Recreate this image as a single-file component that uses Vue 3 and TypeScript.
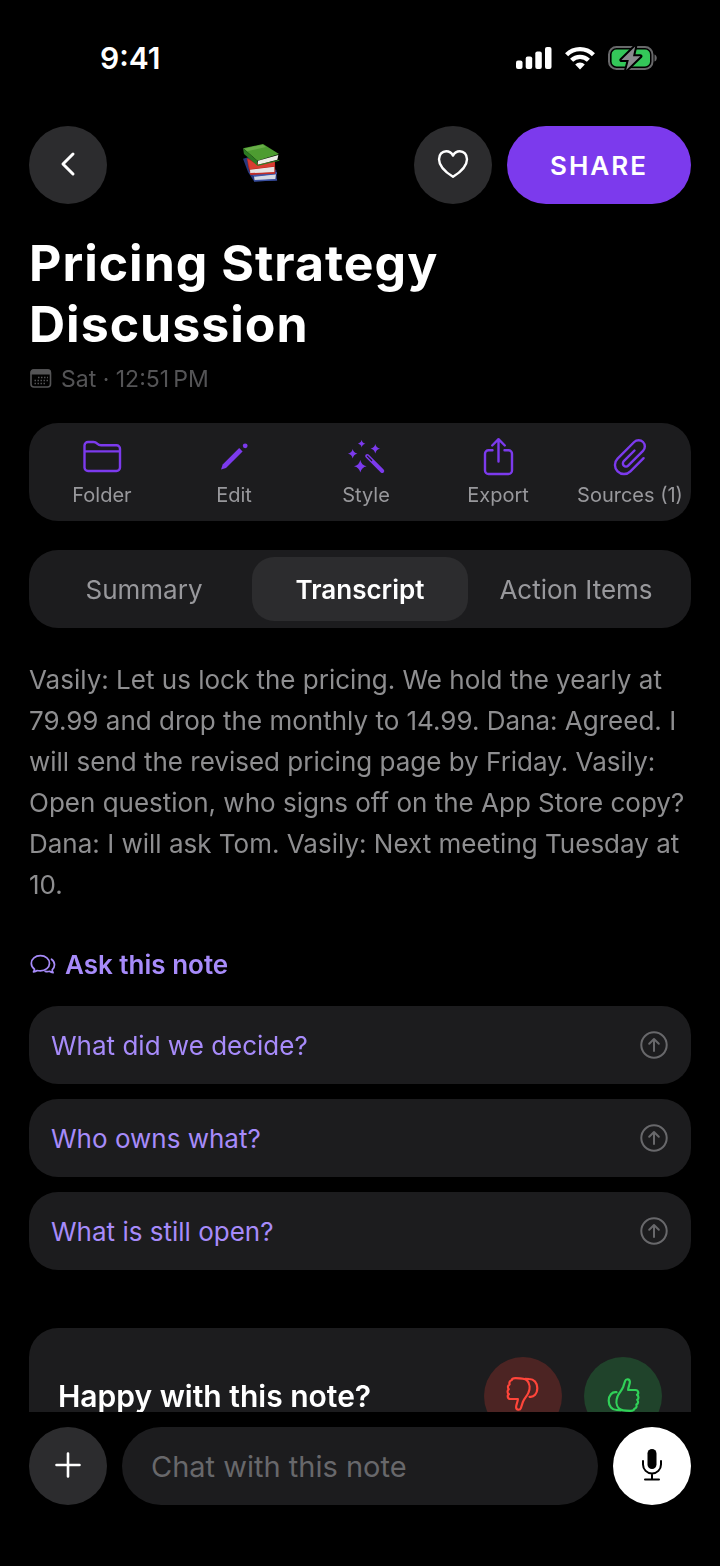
<script setup lang="ts">
import { ref } from 'vue'

type Tab = 'Summary' | 'Transcript' | 'Action Items'

const tabs: Tab[] = ['Summary', 'Transcript', 'Action Items']
const activeTab = ref<Tab>('Transcript')
const questions: string[] = ['What did we decide?', 'Who owns what?', 'What is still open?']
const message = ref('')
const transcript =
  'Vasily: Let us lock the pricing. We hold the yearly at 79.99 and drop the monthly to 14.99. Dana: Agreed. I will send the revised pricing page by Friday. Vasily: Open question, who signs off on the App Store copy? Dana: I will ask Tom. Vasily: Next meeting Tuesday at 10.'
</script>

<template>
  <div class="screen">
    <div class="status">
      <span class="clock">9:41</span>
      <div class="indicators">
        <svg width="36" height="24" viewBox="0 0 36 24" fill="#fff" aria-hidden="true">
          <rect x="0" y="14.5" width="6.5" height="8.5" rx="2" />
          <rect x="9.7" y="10.5" width="6.5" height="12.5" rx="2" />
          <rect x="19.3" y="5.5" width="6.5" height="17.5" rx="2" />
          <rect x="29" y="1" width="6.5" height="22" rx="2" />
        </svg>
        <svg width="30" height="24" viewBox="0 0 30 24" aria-hidden="true">
          <g fill="none" stroke="#fff" stroke-width="4.4">
            <path d="M1.600 8.700a19 19 0 0 1 26.800 0" />
            <path d="M6.600 14.300a12 12 0 0 1 16.800 0" />
          </g>
          <path d="M15 23.400l-4.800-4.900a6.800 6.800 0 0 1 9.600 0z" fill="#fff" />
        </svg>
        <svg width="50" height="26" viewBox="0 0 50 26" aria-hidden="true">
          <rect x="1" y="2" width="43.5" height="22" rx="7.5" fill="none" stroke="#68686a" stroke-width="2" />
          <path d="M46.500 9.500c3 1 3 6 0 7z" fill="#68686a" />
          <rect x="3.600" y="4.600" width="38.400" height="16.800" rx="5" fill="#34c759" />
          <path d="M27.200 1.500L13.400 15h7.400l-2.600 10L32.400 11.200H25z" fill="#8a8a8e" stroke="#000" stroke-width="4" stroke-linejoin="round" />
          <path d="M27.200 1.500L13.400 15h7.400l-2.600 10L32.400 11.200H25z" fill="#8a8a8e" />
        </svg>
      </div>
    </div>

    <header class="header">
      <button class="round" type="button" aria-label="Back">
        <svg width="40" height="40" viewBox="0 0 40 40" fill="none" stroke="#fff" stroke-width="3" stroke-linecap="round" stroke-linejoin="round">
          <path d="M25 9L15 19l10 10" />
        </svg>
      </button>
      <div class="emblem">
        <svg width="40" height="44" viewBox="31 39 120 132" role="img" aria-label="Books">
          <path d="M37 86l16-4 84 38 2 32-69 2-18-28z" fill="#28387c" />
          <path d="M70 139l66-7-2 16-62 4z" fill="#d5d9e4" />
          <path d="M54 128l18 12 67-7v-6l-60-8z" fill="#3d55a8" />
          <path d="M70 150l68-3 2 4-70 4z" fill="#3a50a0" />
          <path d="M49 84l34 14 50-2 1 34-74 4-7-22z" fill="#b3231e" />
          <path d="M58 119l73-9v17l-72 4z" fill="#e6e4e4" />
          <path d="M50 86l32 20 50-11v14l-75 9z" fill="#d83c31" />
          <path d="M58 129l75-2v4l-74 3z" fill="#c22e28" />
          <path d="M37 55l60-13 48 30-65 20z" fill="#4d9c31" />
          <path d="M41 56l55-12 10 7-57 13z" fill="#69ae48" />
          <path d="M37 55l43 37v15L40 72z" fill="#2c7a22" />
          <path d="M82 92l61-17-3 14-58 15z" fill="#eceeE6" />
          <path d="M80 104l66-15v3l-66 16z" fill="#2f7d24" />
        </svg>
      </div>
      <button class="round" type="button" aria-label="Favorite">
        <svg width="40" height="40" viewBox="0 0 40 40" fill="none" stroke="#fff" stroke-width="2.400" stroke-linejoin="round">
          <path d="M20 31.800C12 26.800 6 21.100 6 14.200 6 9.500 9.200 6.200 13.200 6.200c3 0 5.400 1.600 6.800 4.400 1.400-2.800 3.800-4.400 6.800-4.400 4 0 7.200 3.300 7.200 8 0 6.900-6 12.600-14 17.600z" />
        </svg>
      </button>
      <button class="share" type="button">SHARE</button>
    </header>

    <main class="content">
      <h1>Pricing Strategy Discussion</h1>
      <p class="meta">
        <svg width="22" height="22" viewBox="0 0 22 22" aria-hidden="true">
          <rect x="1" y="2" width="19.500" height="17" rx="3" fill="none" stroke="#545456" stroke-width="1.600" />
          <path d="M.6 6.500V4.500A3 3 0 0 1 3.600 1.300h14.300a3 3 0 0 1 3 3.200v2z" fill="#545456" />
          <path d="M8 9.500h10M4.500 12.500H18M4.500 15.500H15" stroke="#545456" stroke-width="1.500" stroke-dasharray="1.500 1.500" />
        </svg>
        <span>Sat · 12:51&#8201;PM</span>
      </p>

      <nav class="tools" aria-label="Note tools">
        <button type="button">
          <svg viewBox="0 0 40 40">
            <path d="M2.500 30.500V8.500A3.500 3.500 0 0 1 6 5h5.500c1.700 0 2.500.4 3.700 1.600 1.300 1.200 2.100 1.600 3.800 1.600h15.500A3.500 3.500 0 0 1 38 11.700v18.800a3.500 3.500 0 0 1-3.500 3.500H6a3.500 3.500 0 0 1-3.500-3.500zM2.500 14.400H38" />
          </svg>
          <span>Folder</span>
        </button>
        <button type="button">
          <svg viewBox="0 0 40 40">
            <path class="solid" d="M7 32.600l1.700-5L25.200 11l3.400 3.400L12 31z" />
            <circle class="solid" cx="31.200" cy="8.800" r="2.400" />
          </svg>
          <span>Edit</span>
        </button>
        <button type="button">
          <svg viewBox="0 0 40 40">
            <path class="solid" d="M15.700 3q.6 3.100 3.700 3.700-3.100.6-3.700 3.700-.6-3.100-3.700-3.700 3.100-.6 3.700-3.700zM29.300 7q.8 3.900 4.700 4.700-3.900.8-4.700 4.700-.8-3.900-4.700-4.700 3.900-.8 4.700-4.700zM6.700 12q.8 3.900 4.700 4.700-3.900.8-4.700 4.700-.8-3.900-4.700-4.700 3.900-.8 4.700-4.700zM14.300 23q1.100 5.200 6.300 6.300-5.200 1.100-6.300 6.300-1.100-5.200-6.300-6.300 5.200-1.100 6.300-6.300z" />
            <path d="M21.200 19l15 15" stroke-width="4" />
            <path class="slot" d="M21.400 19.200l4.300 4.300" />
          </svg>
          <span>Style</span>
        </button>
        <button type="button">
          <svg viewBox="0 0 40 40">
            <path d="M14.500 13.200H10.500A3.500 3.500 0 0 0 7 16.700v16.800a3.500 3.500 0 0 0 3.500 3.500h20a3.500 3.500 0 0 0 3.500-3.500V16.700a3.500 3.500 0 0 0-3.500-3.500h-4M20.500 24.500V2.500M14.200 8.500l6.300-6.300 6.300 6.300" />
          </svg>
          <span>Export</span>
        </button>
        <button type="button">
          <svg viewBox="0 0 40 40">
            <path d="M33.600 21.200L20.400 34.400A9 9 0 0 1 7.600 21.600L24.200 5a6.200 6.200 0 0 1 8.800 8.800L18.200 28.600a3.100 3.100 0 0 1-4.400-4.400L24.500 13.500" />
          </svg>
          <span>Sources (1)</span>
        </button>
      </nav>

      <div class="tabs" role="tablist">
        <button
          v-for="tab in tabs"
          :key="tab"
          type="button"
          role="tab"
          :aria-selected="tab === activeTab"
          :class="{ active: tab === activeTab }"
          @click="activeTab = tab"
        >
          {{ tab }}
        </button>
      </div>

      <p class="transcript">{{ transcript }}</p>

      <h2>
        <svg width="26" height="22" viewBox="0 0 26 22" fill="none" stroke="#a78bfa" stroke-width="1.700" stroke-linecap="round" stroke-linejoin="round" aria-hidden="true">
          <path d="M4.500 15.300C2.400 13.800 1.300 11.700 1.300 9.300c0-4.300 4-7.600 9.100-7.600s9.100 3.300 9.100 7.600-4 7.600-9.100 7.600c-1.200 0-2.200-.1-3.200-.4-1 .7-2.200 1.200-3.700 1.400.7-.8 1-1.700 1-2.600z" />
          <path d="M21.500 5.200c1.900 1.400 3 3.300 3 5.500 0 2-.9 3.800-2.300 5.100 0 1 .3 2 .9 2.900-1.500-.2-2.700-.8-3.600-1.400-1.200.3-2.500.4-4.300.1" />
        </svg>
        Ask this note
      </h2>
      <div class="questions">
        <button v-for="question in questions" :key="question" type="button">
          <span>{{ question }}</span>
          <svg width="30" height="30" viewBox="0 0 30 30" fill="none" stroke="#68686b" stroke-width="2" stroke-linecap="round" stroke-linejoin="round" aria-hidden="true">
            <circle cx="15" cy="15" r="12.700" />
            <path d="M15 21V9.500M10.200 13.700L15 9l4.800 4.700" />
          </svg>
        </button>
      </div>

      <section class="feedback">
        <h3>Happy with this note?</h3>
        <button class="round bad" type="button" aria-label="Thumbs down">
          <svg width="40" height="40" viewBox="0 0 40 40">
            <g transform="rotate(180 20 18.500)">
              <path d="M14.500 20.500c1.200-3.500 4.300-6 5.600-9.300l2-6.200c.9-2.600 4.600-2.200 4.800.8.100 2.500-1.700 5-1.800 8.200h7.300c3.300 0 3.600 3.900 1.600 4.800 2 1.200 1.800 4 .2 5 1.500 1.500 1 4-.8 4.800.8 2-.3 3.700-2 4.100-.2 1.500-1.700 2.200-4 2.200-5 0-9.500-.3-11.400-2.300-3.200-3.200-3-8.500-1.500-12.100z" />
              <path d="M13.500 16.200c-4.500-.8-7.800 3.200-7.800 8.500 0 5.500 3.500 9.300 8 9.300l4 .2" />
            </g>
          </svg>
        </button>
        <button class="round good" type="button" aria-label="Thumbs up">
          <svg width="40" height="40" viewBox="0 0 40 40">
            <path d="M14.500 20.500c1.200-3.500 4.300-6 5.600-9.300l2-6.200c.9-2.600 4.600-2.200 4.800.8.100 2.500-1.700 5-1.800 8.200h7.300c3.300 0 3.600 3.900 1.600 4.800 2 1.200 1.800 4 .2 5 1.500 1.500 1 4-.8 4.800.8 2-.3 3.700-2 4.100-.2 1.500-1.700 2.200-4 2.200-5 0-9.500-.3-11.400-2.300-3.200-3.200-3-8.500-1.500-12.100z" />
            <path d="M13.500 16.200c-4.500-.8-7.800 3.200-7.800 8.500 0 5.500 3.500 9.300 8 9.300l4 .2" />
          </svg>
        </button>
      </section>
    </main>

    <form class="composer" @submit.prevent>
      <button class="round" type="button" aria-label="Add attachment">
        <svg width="40" height="40" viewBox="0 0 40 40" fill="none" stroke="#fff" stroke-width="2.600" stroke-linecap="round">
          <path d="M20 7.500v23M8.500 19h23" />
        </svg>
      </button>
      <input v-model="message" type="text" placeholder="Chat with this note" aria-label="Chat with this note" />
      <button class="round mic" type="button" aria-label="Record voice">
        <svg width="40" height="40" viewBox="0 0 40 40" fill="none" stroke="#000" stroke-width="2" stroke-linecap="round">
          <rect x="15.500" y="3" width="9" height="20" rx="4.500" fill="#000" stroke="none" />
          <path d="M11 15v3.500a9 9 0 0 0 18 0V15M20 27.500v6M13 33.500h14" />
        </svg>
      </button>
    </form>
  </div>
</template>

<style>
html,
body {
  background: #000;
}
</style>

<style scoped>
.screen {
  display: flex;
  flex-direction: column;
  height: 100vh;
  overflow: hidden;
  background: #000;
  color: #fff;
  font-family: Inter, "Liberation Sans", sans-serif;
}
.screen * {
  box-sizing: border-box;
}
button,
input {
  border: 0;
  margin: 0;
  padding: 0;
  font: inherit;
  color: inherit;
}
button {
  cursor: pointer;
}
h1,
h2,
h3,
p {
  margin: 0;
}
svg {
  display: block;
  flex: none;
}
.status {
  flex: none;
  display: flex;
  align-items: center;
  justify-content: space-between;
  height: 116px;
  padding: 0 62px 0 100px;
}
.clock {
  font-size: 30px;
  font-weight: 600;
}
.indicators {
  display: flex;
  align-items: center;
  gap: 13px;
}
.header {
  flex: none;
  display: flex;
  align-items: center;
  gap: 15px;
  padding: 10px 29px 0;
}
.round {
  flex: none;
  display: grid;
  place-items: center;
  width: 78px;
  height: 78px;
  border-radius: 50%;
  background: #2c2c2e;
}
.emblem {
  flex: 1;
  display: grid;
  place-items: center;
}
.share {
  width: 184px;
  height: 78px;
  border-radius: 39px;
  background: #7c3aed;
  font-size: 26px;
  font-weight: 600;
  letter-spacing: 2px;
}
.content {
  flex: 1;
  min-height: 0;
  overflow: hidden;
  padding: 29px 29px 0;
}
h1 {
  font-size: 50px;
  line-height: 61px;
  font-weight: 700;
  letter-spacing: 1px;
}
.meta {
  display: flex;
  align-items: center;
  gap: 9px;
  margin-top: 10px;
  padding-left: 1px;
  font-size: 23px;
  line-height: 28px;
  color: #545456;
}
.tools {
  display: flex;
  margin-top: 30px;
  padding: 14px 7px;
  border-radius: 29px;
  background: #1c1c1e;
  overflow-x: auto;
  scrollbar-width: none;
}
.tools button {
  flex: 1 0 132px;
  display: flex;
  flex-direction: column;
  align-items: center;
  gap: 6px;
  background: none;
  color: #98989c;
  font-size: 20px;
  line-height: 24px;
  white-space: nowrap;
}
.tools svg {
  width: 40px;
  height: 40px;
  fill: none;
  stroke: #7c3aed;
  stroke-width: 2.4;
  stroke-linecap: round;
  stroke-linejoin: round;
}
.tools .solid {
  fill: #7c3aed;
  stroke: none;
}
.tools .slot {
  stroke: #1c1c1e;
  stroke-width: 1.2;
}
.tabs {
  display: grid;
  grid-template-columns: repeat(3, minmax(0, 1fr));
  margin-top: 29px;
  padding: 7px;
  border-radius: 29px;
  background: #1c1c1e;
}
.tabs button {
  height: 64px;
  border-radius: 22px;
  background: none;
  color: #98989c;
  font-size: 26px;
}
.tabs .active {
  background: #2c2c2e;
  color: #fff;
  font-weight: 600;
}
.transcript {
  margin-top: 31px;
  font-size: 26px;
  line-height: 41px;
  color: #8e8e90;
}
h2 {
  display: flex;
  align-items: center;
  gap: 9px;
  margin-top: 44px;
  padding-left: 1px;
  font-size: 26px;
  line-height: 32px;
  font-weight: 600;
  color: #a78bfa;
}
.questions {
  display: flex;
  flex-direction: column;
  gap: 15px;
  margin-top: 25px;
}
.questions button {
  display: flex;
  align-items: center;
  justify-content: space-between;
  height: 78px;
  padding: 0 22px;
  border-radius: 29px;
  background: #1c1c1e;
  color: #a78bfa;
  font-size: 26px;
}
.feedback {
  display: flex;
  align-items: center;
  gap: 22px;
  margin-top: 58px;
  padding: 29px;
  border-radius: 29px;
  background: #1c1c1e;
}
.feedback h3 {
  flex: 1;
  font-size: 30px;
  font-weight: 600;
}
.feedback svg {
  fill: none;
  stroke-width: 2.2;
  stroke-linejoin: round;
  stroke-linecap: round;
}
.bad {
  background: #4c2423;
  stroke: #ff453a;
}
.good {
  background: #20432b;
  stroke: #30d158;
}
.composer {
  flex: none;
  display: flex;
  gap: 15px;
  padding: 15px 29px 61px;
}
.composer input {
  flex: 1;
  min-width: 0;
  height: 78px;
  padding: 0 29px;
  border-radius: 39px;
  background: #1c1c1e;
  font-size: 29px;
  outline: none;
}
.composer input::placeholder {
  color: #68686b;
  opacity: 1;
}
.mic {
  background: #fff;
}
</style>
